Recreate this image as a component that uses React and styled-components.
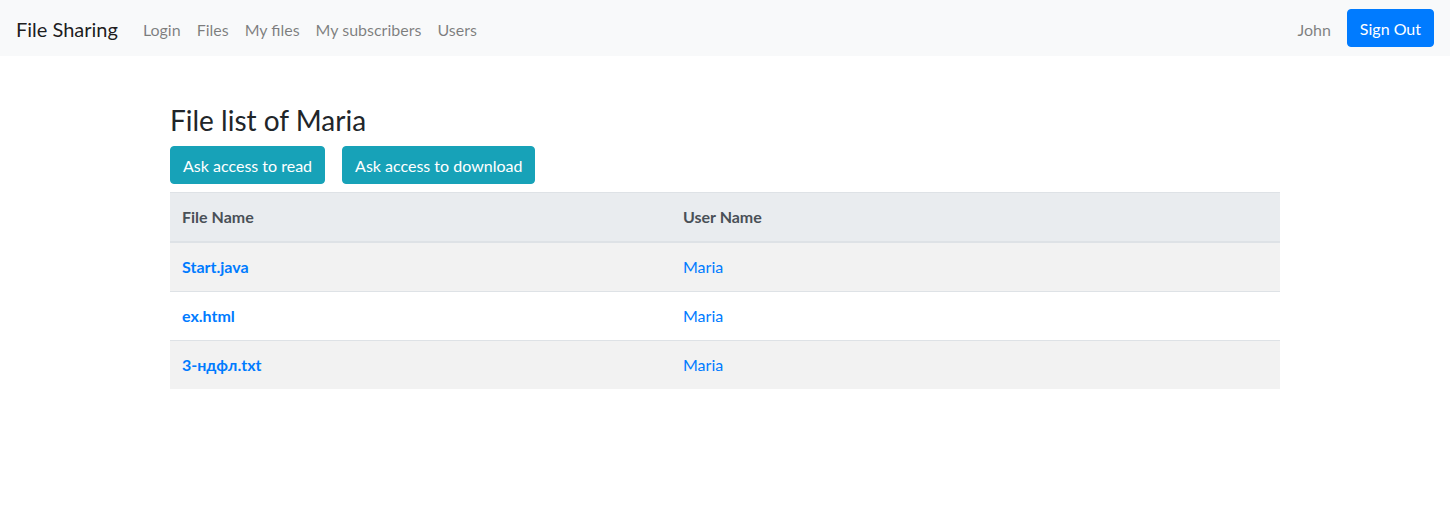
import React from "react";
import styled, { createGlobalStyle } from "styled-components";

const GlobalStyle = createGlobalStyle`
  * {
    box-sizing: border-box;
  }

  body {
    margin: 0;
    font-family: Lato, "Noto Sans", sans-serif;
    font-size: 16px;
    line-height: 1.5;
    color: #212529;
    background-color: #fff;
  }
`;

const Navbar = styled.nav`
  display: flex;
  align-items: center;
  justify-content: space-between;
  height: 56px;
  padding: 8px 16px;
  background-color: #f8f9fa;
`;

const NavGroup = styled.div`
  display: flex;
  align-items: center;
`;

const Brand = styled.a`
  font-size: 20px;
  line-height: 30px;
  padding-top: 2px;
  color: rgba(0, 0, 0, 0.9);
  margin-right: 17px;
  text-decoration: none;
`;

const NavLink = styled.a`
  padding: 10px 8px 6px;
  color: rgba(0, 0, 0, 0.5);
  text-decoration: none;
`;

const Button = styled.button`
  font-family: inherit;
  font-size: 16px;
  line-height: 24px;
  padding: 7px 12px 5px;
  border: 1px solid ${(p) => p.$bg};
  border-radius: 4px;
  background-color: ${(p) => p.$bg};
  color: #fff;
  cursor: pointer;
`;

const Container = styled.main`
  width: 1140px;
  margin: 48px auto 0;
  padding: 0 15px;
`;

const Title = styled.h3`
  margin: 0 0 8px;
  font-size: 28px;
  font-weight: 400;
  line-height: 1.2;
`;

const Actions = styled.div`
  display: flex;
  gap: 17px;
  margin-bottom: 8px;
`;

const Table = styled.table`
  width: 100%;
  border-collapse: collapse;
`;

const Th = styled.th`
  width: ${(p) => p.$width || "auto"};
  padding: 12px;
  text-align: left;
  color: #495057;
  background-color: #e9ecef;
  border-top: 1px solid #dee2e6;
  border-bottom: 2px solid #dee2e6;
  font-weight: 700;
`;

const Row = styled.tr`
  background-color: ${(p) => (p.$striped ? "rgba(0, 0, 0, 0.05)" : "transparent")};
`;

const Td = styled.td`
  padding: 12px;
  border-top: 1px solid #dee2e6;
`;

const Link = styled.a`
  color: #007bff;
  font-weight: ${(p) => (p.$bold ? 700 : 400)};
  text-decoration: none;
`;

const files = [
  { name: "Start.java", user: "Maria" },
  { name: "ex.html", user: "Maria" },
  { name: "3-ндфл.txt", user: "Maria" },
];

export default function App() {
  return (
    <>
      <GlobalStyle />
      <Navbar>
        <NavGroup>
          <Brand href="#">File Sharing</Brand>
          <NavLink href="#">Login</NavLink>
          <NavLink href="#">Files</NavLink>
          <NavLink href="#">My files</NavLink>
          <NavLink href="#">My subscribers</NavLink>
          <NavLink href="#">Users</NavLink>
        </NavGroup>
        <NavGroup>
          <NavLink href="#">John</NavLink>
          <Button $bg="#007bff" style={{ marginLeft: 8 }}>Sign Out</Button>
        </NavGroup>
      </Navbar>
      <Container>
        <Title>File list of Maria</Title>
        <Actions>
          <Button $bg="#17a2b8">Ask access to read</Button>
          <Button $bg="#17a2b8">Ask access to download</Button>
        </Actions>
        <Table>
          <thead>
            <tr>
              <Th $width="501px">File Name</Th>
              <Th>User Name</Th>
            </tr>
          </thead>
          <tbody>
            {files.map((f, i) => (
              <Row key={f.name} $striped={i % 2 === 0}>
                <Td>
                  <Link href="#" $bold>{f.name}</Link>
                </Td>
                <Td>
                  <Link href="#">{f.user}</Link>
                </Td>
              </Row>
            ))}
          </tbody>
        </Table>
      </Container>
    </>
  );
}
